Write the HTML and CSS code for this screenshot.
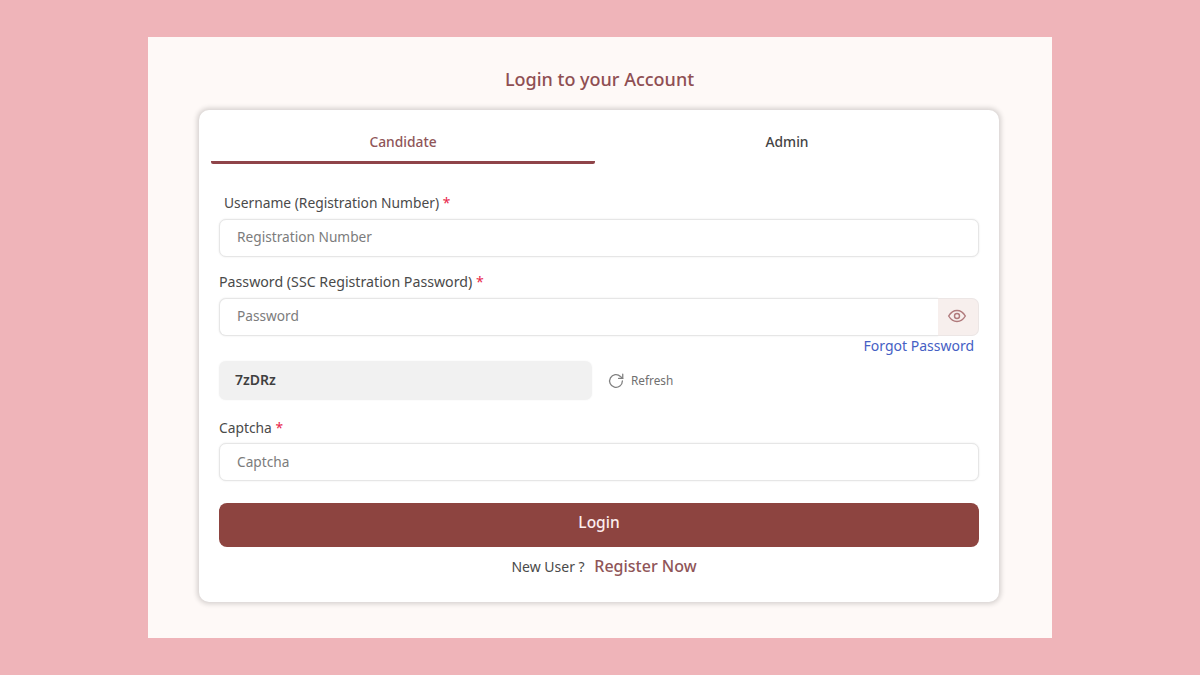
FILE: index.html
```html
<!DOCTYPE html>
<html lang="en">
<head>
  <meta charset="UTF-8" />
  <title>Login to your Account</title>
  <link rel="stylesheet" href="styles.css">
</head>
<body>
  <div class="sheet">
    <h1 class="title">Login to your Account</h1>
    <div class="card">
      <div class="tabs">
        <div class="tab active">Candidate</div>
        <div class="tab">Admin</div>
      </div>
      <form class="form">
        <label class="label label-indent">Username (Registration Number) <span class="req">*</span></label>
        <input class="input input-raised" type="text" placeholder="Registration Number" />

        <label class="label label-password">Password (SSC Registration Password) <span class="req">*</span></label>
        <div class="password-wrap">
          <input class="input input-raised input-password" type="password" placeholder="Password" />
          <span class="eye">
            <svg width="20" height="20" viewBox="0 0 24 24" fill="none" stroke="#b07a7c" stroke-width="1.7">
              <path d="M2 12c2.600-4.400 6-6.600 10-6.600s7.400 2.200 10 6.600c-2.600 4.400-6 6.600-10 6.600S4.600 16.400 2 12z" />
              <circle cx="12" cy="12" r="3" />
            </svg>
          </span>
        </div>
        <div class="forgot-row"><a class="forgot">Forgot Password</a></div>

        <div class="captcha-row">
          <div class="captcha-code">7zDRz</div>
          <div class="refresh">
            <svg width="18" height="18" viewBox="0 0 24 24" fill="none" stroke="#808080" stroke-width="1.7" stroke-linecap="round" stroke-linejoin="round">
              <path d="M20.500 12a8.500 8.500 0 1 1-2.600-6.100L21 8.500" />
              <path d="M21 3v5.500h-5.500" />
            </svg>
            <span>Refresh</span>
          </div>
        </div>

        <label class="label label-captcha">Captcha <span class="req">*</span></label>
        <input class="input" type="text" placeholder="Captcha" />

        <button class="login" type="button">Login</button>
        <div class="register">New User ? <a class="register-link">Register Now</a></div>
      </form>
    </div>
  </div>
</body>
</html>
```

FILE: styles.css
```css
* {
  box-sizing: border-box;
}
body {
  margin: 0;
  height: 100vh;
  overflow: hidden;
  background: #efb4b9;
  font-family: 'Noto Sans', sans-serif;
  display: flex;
  justify-content: center;
  align-items: center;
}
.sheet {
  width: 904px;
  height: 601px;
  background: #fef9f7;
  padding: 30px 52px 0 51px;
}
.title {
  margin: 0 0 17px;
  height: 26px;
  line-height: 25px;
  font-size: 18px;
  font-weight: 500;
  color: #8f4f53;
  text-align: center;
}
.card {
  width: 800px;
  height: 492px;
  background: #fff;
  border-radius: 10px;
  box-shadow: 0 0 5px 2px rgba(0, 0, 0, 0.16);
  padding: 0 20px 0 12px;
}
.tabs {
  display: flex;
  height: 54px;
}
.tab {
  width: 384px;
  height: 54px;
  line-height: 64px;
  padding-bottom: 3px;
  text-align: center;
  font-size: 13.8px;
  font-weight: 500;
  color: #444;
}
.tab.active {
  color: #8f5558;
  border-bottom: 3px solid #8f4449;
  border-radius: 0 0 2px 2px;
}
.form {
  margin-left: 8px;
  padding-top: 29px;
  display: flex;
  flex-direction: column;
}
.label {
  height: 20px;
  line-height: 19px;
  font-size: 13.8px;
  color: #4a4a4a;
  margin-bottom: 6px;
}
.label-indent {
  padding-left: 5px;
}
.label-password {
  margin-top: 15px;
  font-size: 14.2px;
}
.label-captcha {
  margin-top: 17px;
  line-height: 21px;
}
.req {
  color: #e8264a;
}
.input {
  width: 100%;
  height: 38px;
  border: 1px solid #e6e6e6;
  border-radius: 7px;
  padding: 0 17px 2px;
  background: #fff;
  font-family: inherit;
  font-size: 13.7px;
  box-shadow: 0 0 2px rgba(0, 0, 0, 0.1);
}
.input-raised {
  padding-bottom: 4px;
}
.input::placeholder {
  color: #7c7c7c;
  opacity: 1;
}
.password-wrap {
  display: flex;
  height: 38px;
}
.input-password {
  border-right: 0;
  border-radius: 7px 0 0 7px;
  flex: 1;
}
.eye {
  width: 41px;
  padding: 0 2px 2px 0;
  background: #f7efed;
  border: 1px solid #ece6e5;
  border-left: 0;
  border-radius: 0 7px 7px 0;
  display: flex;
  align-items: center;
  justify-content: center;
}
.forgot-row {
  height: 25px;
  line-height: 19px;
  text-align: right;
  padding-right: 5px;
}
.forgot {
  font-size: 14px;
  color: #4560c4;
}
.captcha-row {
  display: flex;
  align-items: center;
  gap: 15px;
  height: 39px;
}
.captcha-code {
  width: 373px;
  height: 39px;
  line-height: 37px;
  padding-left: 16px;
  border-radius: 7px;
  background: #f1f1f1;
  font-size: 14px;
  font-weight: 600;
  color: #3f3f3f;
  box-shadow: 0 0 2px rgba(0, 0, 0, 0.06);
}
.refresh {
  display: flex;
  align-items: center;
  gap: 6px;
  font-size: 11.8px;
  color: #707070;
}
.refresh span {
  margin-bottom: 2px;
}
.login {
  width: 100%;
  height: 44px;
  margin-top: 22px;
  padding-bottom: 7px;
  border: 0;
  border-radius: 8px;
  background: #8d4440;
  color: #fdeeee;
  font-family: inherit;
  font-size: 15.500px;
  font-weight: 500;
}
.register {
  margin-top: 7px;
  padding-left: 10px;
  height: 24px;
  line-height: 24px;
  text-align: center;
  font-size: 14px;
  color: #4a4a4a;
}
.register-link {
  margin-left: 6px;
  font-size: 16px;
  font-weight: 500;
  color: #8f5558;
}
```
